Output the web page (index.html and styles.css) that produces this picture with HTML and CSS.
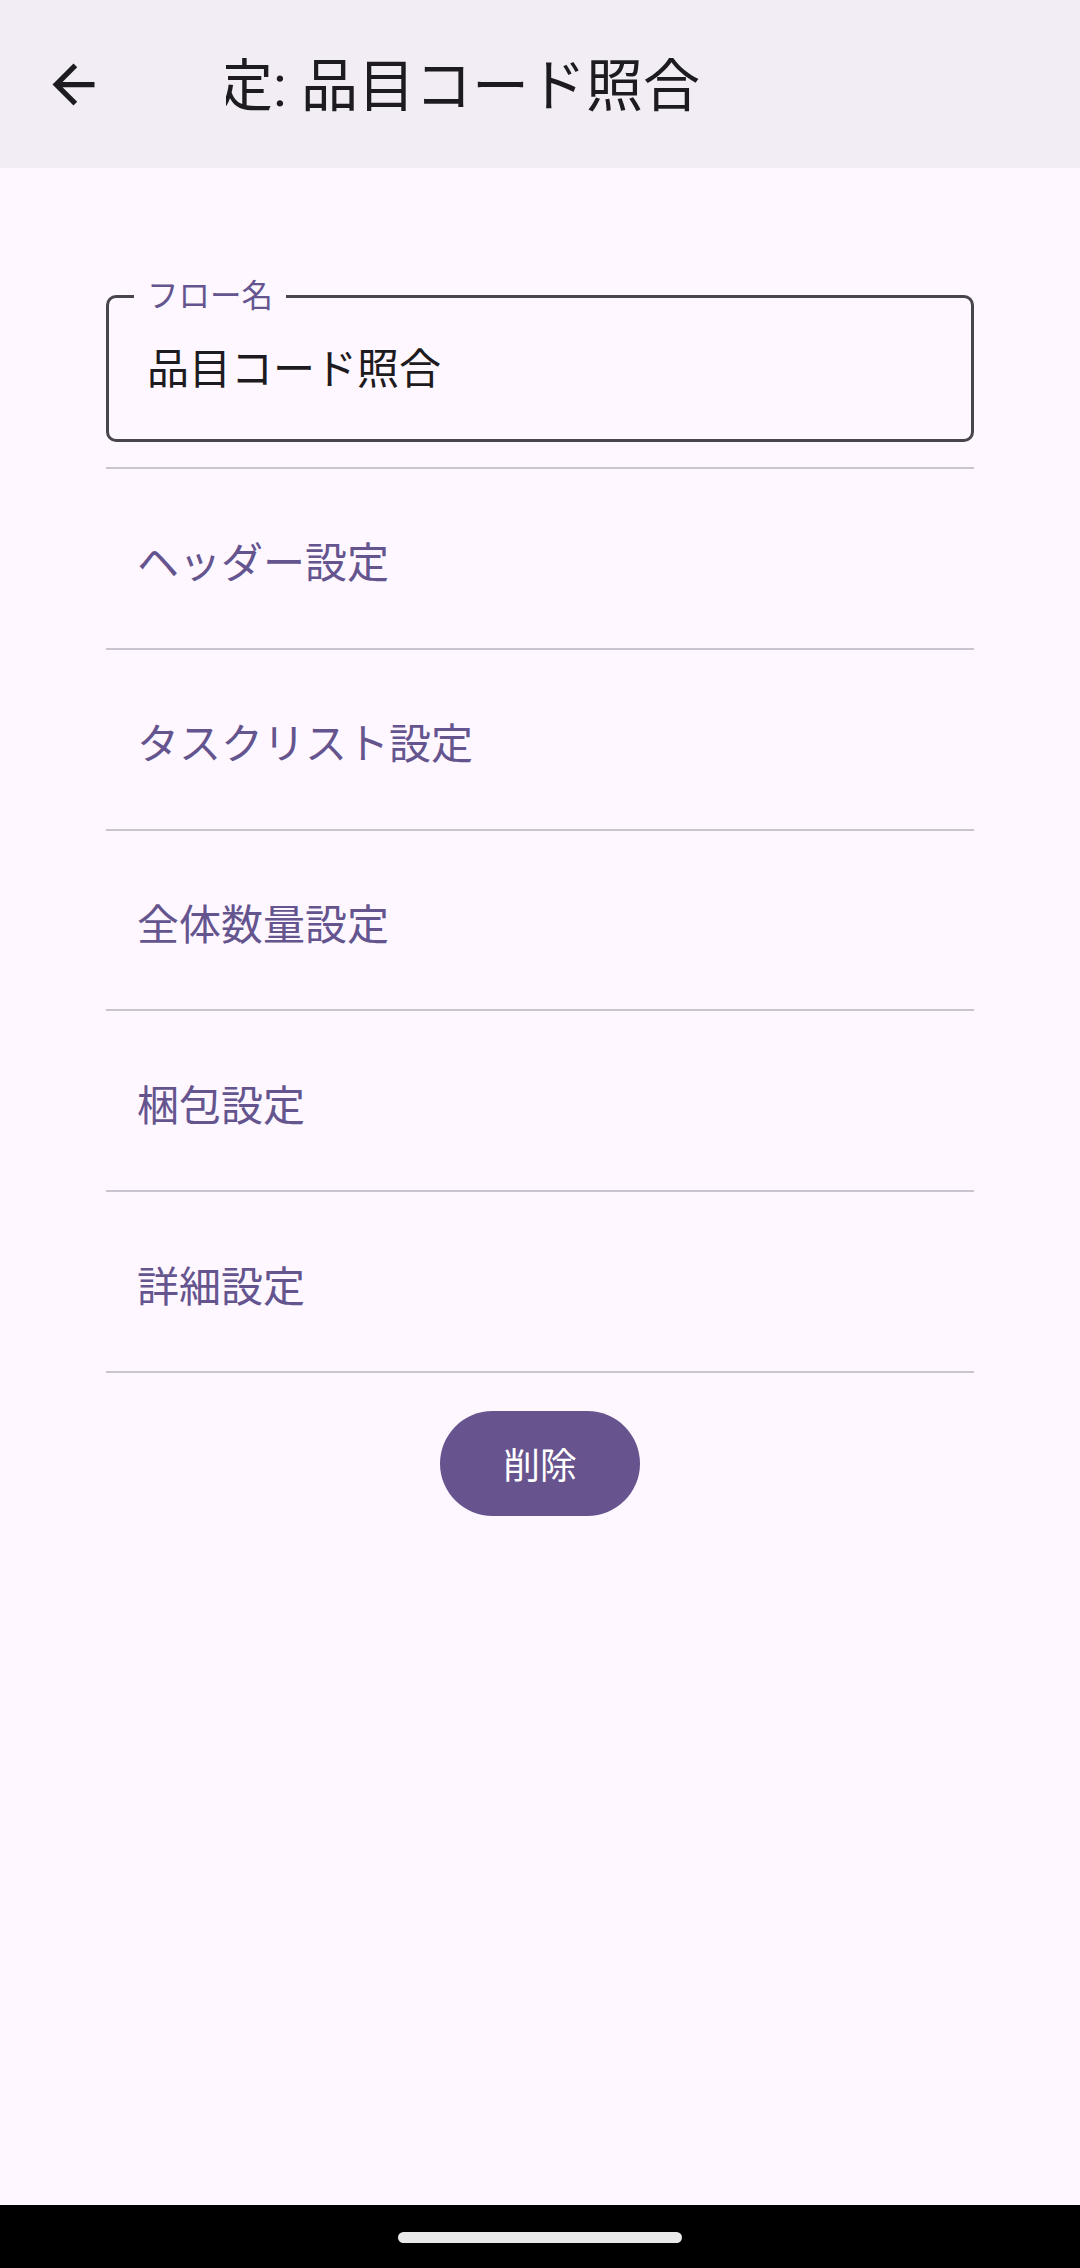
FILE: index.html
```html
<!DOCTYPE html>
<html lang="ja">
<head>
<meta charset="utf-8">
<title>フロー設定</title>
<link rel="stylesheet" href="styles.css">
</head>
<body>
<div class="app">
  <header class="topbar">
    <button class="back" aria-label="戻る">
      <svg viewBox="0 0 24 24" width="63" height="63"><path d="M20 11H7.83l5.59-5.59L12 4l-8 8 8 8 1.41-1.41L7.83 13H20v-2z" fill="#1d1b20"/></svg>
    </button>
    <div class="title-clip"><span class="title">定: 品目コード照合</span></div>
  </header>
  <main class="content">
    <div class="field">
      <span class="field-label">フロー名</span>
      <div class="field-value">品目コード照合</div>
    </div>
    <ul class="menu">
      <li class="menu-item">ヘッダー設定</li>
      <li class="menu-item">タスクリスト設定</li>
      <li class="menu-item">全体数量設定</li>
      <li class="menu-item">梱包設定</li>
      <li class="menu-item">詳細設定</li>
    </ul>
    <div class="actions">
      <button class="delete">削除</button>
    </div>
  </main>
  <footer class="navbar"><div class="handle"></div></footer>
</div>
</body>
</html>
```

FILE: styles.css
```css
* { box-sizing: border-box; }
html, body { margin: 0; padding: 0; }
body {
  width: 1080px;
  height: 2268px;
  overflow: hidden;
  background: #fef7ff;
  font-family: Roboto, "Noto Sans CJK JP", sans-serif;
  color: #1d1b20;
}
.app {
  display: flex;
  flex-direction: column;
  height: 2268px;
}
.topbar {
  height: 168px;
  flex: none;
  background: #f2edf4;
  display: flex;
  align-items: center;
}
.back {
  width: 63px;
  height: 63px;
  margin-left: 42px;
  padding: 0;
  border: 0;
  background: none;
  display: flex;
}
.title-clip {
  margin-left: 121px;
  flex: 1;
  overflow: hidden;
  white-space: nowrap;
  margin-right: 42px;
  padding-top: 5px;
}
.title {
  display: inline-block;
  margin-left: -10px;
  font-size: 57px;
  line-height: 80px;
  color: #1d1b20;
}
.content {
  flex: 1;
  padding: 127px 106px 0;
}
.field {
  position: relative;
  height: 147px;
  border: 3px solid #49454f;
  border-radius: 10px;
  display: flex;
  align-items: center;
  padding-left: 38px;
}
.field-label {
  position: absolute;
  left: 25px;
  top: -21px;
  padding: 0 13px;
  background: #fef7ff;
  font-size: 31.5px;
  line-height: 40px;
  color: #65558f;
}
.field-value {
  font-size: 42px;
  line-height: 56px;
  color: #1d1b20;
  padding-top: 3px;
}
.menu {
  list-style: none;
  margin: 25px 0 0;
  padding: 0;
  border-top: 2.6px solid #cac4d0;
}
.menu-item {
  height: 180.8px;
  border-bottom: 2.6px solid #cac4d0;
  display: flex;
  align-items: center;
  padding-left: 31px;
  padding-top: 3px;
  font-size: 42px;
  color: #65558f;
}
.actions {
  display: flex;
  justify-content: center;
  margin-top: 38px;
}
.delete {
  height: 105px;
  padding: 0 63px;
  border: 0;
  border-radius: 53px;
  background: #67548e;
  color: #ffffff;
  font-family: Roboto, "Noto Sans CJK JP", sans-serif;
  font-size: 36.75px;
}
.navbar {
  height: 63px;
  flex: none;
  background: #000000;
  display: flex;
  justify-content: center;
  padding-top: 27px;
}
.handle {
  width: 284px;
  height: 10.5px;
  border-radius: 6px;
  background: #e9e9e9;
}
```
